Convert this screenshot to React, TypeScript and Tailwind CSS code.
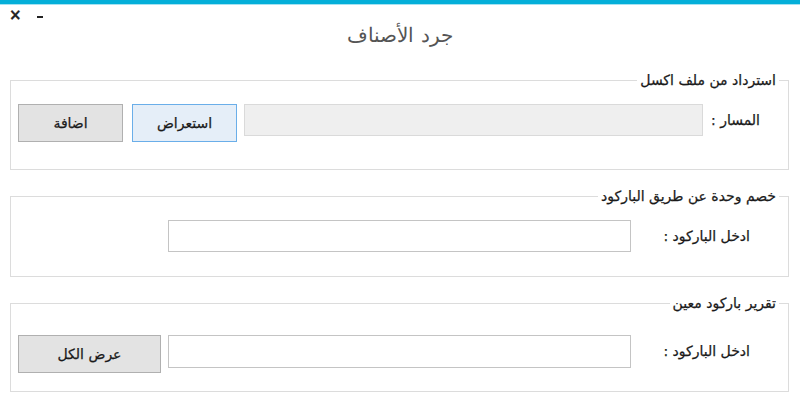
import React from "react";

function GroupBox({ title, children, className }: { title: string; children: React.ReactNode; className: string }) {
  return (
    <fieldset className={"ml-[10px] mr-[11px] border border-[#dcdcdc] " + className}>
      <legend className="mr-[9px] px-[3px] text-[14px] leading-[16px] text-[#1a1a1a]">{title}</legend>
      {children}
    </fieldset>
  );
}

function App() {
  return (
    <div dir="rtl" className="w-[800px] h-[409px] overflow-hidden bg-white font-['DejaVu_Sans',sans-serif] text-[#1a1a1a] [-webkit-text-stroke:0.25px]">
      <div className="h-[4px] bg-[#04afd9]" />
      <div className="h-[1px] bg-[#a6e2f1]" />

      <div dir="ltr" className="flex items-center h-[18px] pt-[2px] pl-[9px] gap-[15px] text-[#222]">
        <span className="text-[15px] leading-[16px] font-bold">×</span>
        <span className="block w-[6px] h-[2px] mt-[4px] bg-[#222]" />
      </div>

      <div className="h-[24px] flex items-center justify-center text-[20px] font-extralight text-[#555] [-webkit-text-stroke:0px]">
        جرد الأصناف
      </div>

      <GroupBox title="استرداد من ملف اكسل" className="mt-[25px]">
        <div className="flex items-start pt-[16px] pb-[27px] pr-[28px]">
          <div className="w-[57px] h-[32px] flex items-center text-[14px]">المسار :</div>
          <div className="w-[459px] h-[32px] bg-[#efefef] border border-[#dadada]" />
          <button className="mr-[7px] w-[105px] h-[38px] bg-[#e5eef8] border border-[#6aaee9] text-[14px]">
            استعراض
          </button>
          <button className="mr-[9px] w-[105px] h-[38px] bg-[#e3e3e3] border border-[#b0b0b0] text-[14px]">
            اضافة
          </button>
        </div>
      </GroupBox>

      <GroupBox title="خصم وحدة عن طريق الباركود" className="mt-[18px]">
        <div className="flex items-start pt-[16px] pb-[24px] pr-[38px]">
          <div className="w-[119px] h-[32px] flex items-center text-[14px]">ادخل الباركود :</div>
          <input className="w-[463px] h-[32px] bg-white border border-[#c4c4c4] outline-none" />
        </div>
      </GroupBox>

      <GroupBox title="تقرير باركود معين" className="mt-[18px]">
        <div className="flex items-start pt-[24px] pb-[18px] pr-[38px]">
          <div className="w-[119px] h-[33px] flex items-center text-[14px]">ادخل الباركود :</div>
          <input className="w-[463px] h-[33px] bg-white border border-[#c4c4c4] outline-none" />
          <button className="mr-[7px] w-[143px] h-[38px] bg-[#e3e3e3] border border-[#b0b0b0] text-[14px]">
            عرض الكل
          </button>
        </div>
      </GroupBox>
    </div>
  );
}

export default App;
